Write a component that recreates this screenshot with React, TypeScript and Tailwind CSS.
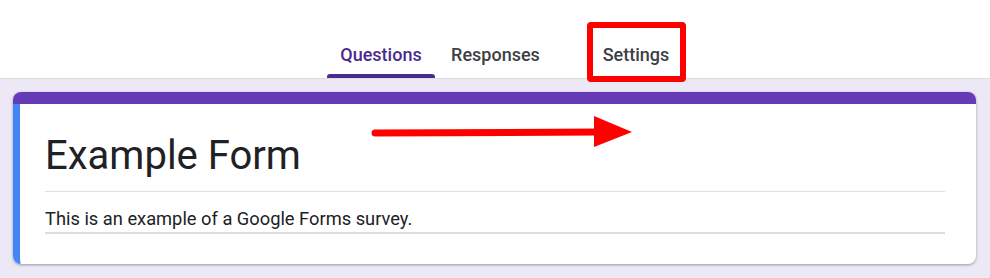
import React from "react";

function Tab({ label, active, width }: { label: string; active?: boolean; width: string }) {
  return (
    <div className={`${width} h-[78px] flex flex-col items-center`}>
      <span
        className={`pt-[45px] text-[18px] leading-[20px] font-medium ${
          active ? "text-[#4a2a8f]" : "text-[#3c4043]"
        }`}
      >
        {label}
      </span>
      {active && <div className="mt-auto h-[4px] w-full rounded-t-[3px] bg-[#4a2a8f]" />}
    </div>
  );
}

export default function App() {
  return (
    <div className="relative w-[990px] h-[278px] overflow-hidden bg-[#ede8f6] font-['Roboto',sans-serif]">
      <div className="bg-white border-b border-[#dadce0] flex pl-[327px]">
        <Tab label="Questions" active width="w-[108px]" />
        <div className="w-[5px]" />
        <Tab label="Responses" width="w-[111px]" />
        <div className="w-[40px]" />
        <Tab label="Settings" width="w-[90px]" />
      </div>

      <div className="px-[13px] pt-[13px] pr-[14px]">
        <div className="rounded-lg shadow-[0_1px_3px_rgba(0,0,0,0.35)] bg-white">
          <div className="h-[12px] rounded-t-lg bg-[#673ab7]" />
          <div className="border-l-[7px] border-[#4285f4] rounded-bl-lg pl-[25px] pr-[31px] pt-[28px] pb-[30px]">
            <h1 className="text-[40px] leading-[48px] text-[#202124] font-normal pb-[11px] border-b border-[#e0e0e0]">
              Example Form
            </h1>
            <p className="mt-[15px] text-[18.3px] leading-[24px] text-[#202124] pb-[1px] border-b-2 border-[#dadce0]">
              This is an example of a Google Forms survey.
            </p>
          </div>
        </div>
      </div>

      <div className="absolute left-[587px] top-[22px] w-[99px] h-[60px] border-[6px] border-[#ff0000] rounded-[4px]" />

      <svg className="absolute left-0 top-0" width="990" height="278" viewBox="0 0 990 278">
        <line x1="375" y1="133" x2="600" y2="132" stroke="#ff0000" strokeWidth="7" strokeLinecap="round" />
        <polygon points="594,116 632,132 594,147" fill="#ff0000" />
      </svg>
    </div>
  );
}
